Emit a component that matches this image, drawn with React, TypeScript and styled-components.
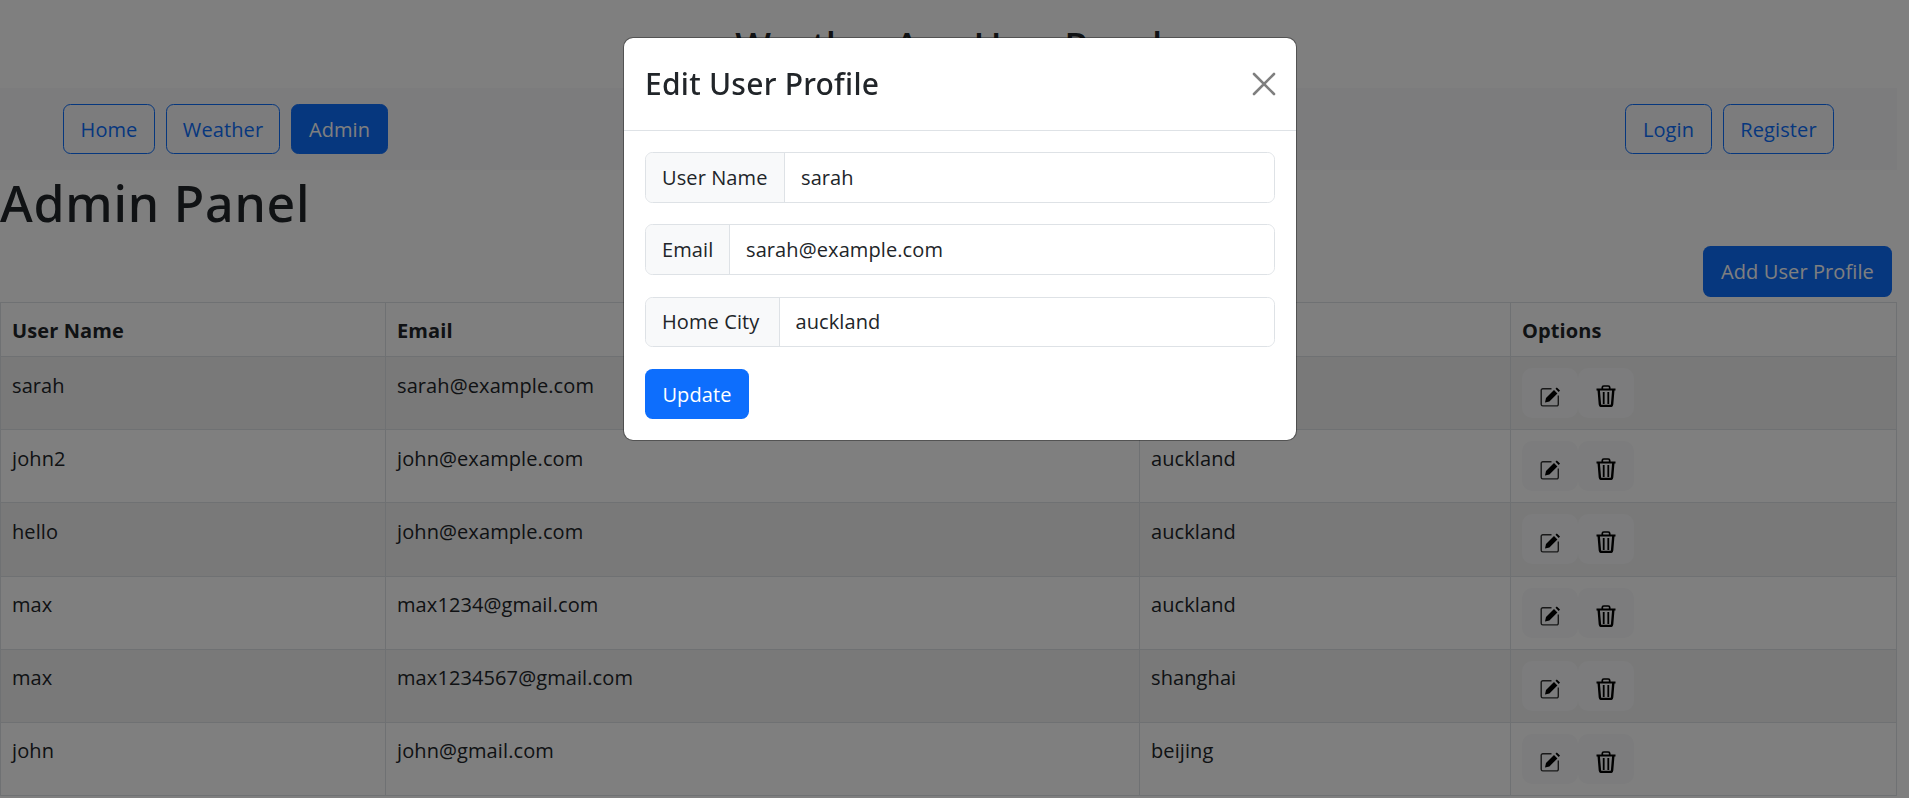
import React from "react";
import styled, { createGlobalStyle } from "styled-components";

const FONT = `"Open Sans", "Noto Sans", "Liberation Sans", sans-serif`;
const HEADING = `"Noto Sans", "Open Sans", "Liberation Sans", sans-serif`;

const Global = createGlobalStyle`
  html, body { margin: 0; padding: 0; background: #fff; }
  body { font-family: ${FONT}; font-size: 20px; color: #212529; letter-spacing: 0.1px; overflow: hidden; }
  * { box-sizing: border-box; }
`;

const Page = styled.div`
  width: 1897px;
`;
const SiteTitle = styled.h1`
  margin: 0;
  padding: 15px 0 12.5px;
  height: 87.5px;
  line-height: 60px;
  font-family: ${HEADING};
  font-size: 38px;
  font-weight: 500;
  letter-spacing: -0.7px;
  text-align: center;
`;
const NavBar = styled.nav`
  height: 82px;
  background: #f8f9fa;
  padding: 16.5px 63px 16px 63px;
  display: flex;
  justify-content: space-between;
`;
const NavGroup = styled.div`
  display: flex;
  gap: 11px;
`;
const NavButton = styled.button<{ $active?: boolean; $w: number }>`
  width: ${(p) => p.$w}px;
  height: 50px;
  border-radius: 7.5px;
  border: 1.25px solid #0d6efd;
  background: ${(p) => (p.$active ? "#0d6efd" : "transparent")};
  color: ${(p) => (p.$active ? "#fff" : "#0d6efd")};
  font: inherit;
  letter-spacing: inherit;
  padding: 0;
`;
const PageTitle = styled.h1`
  margin: 0;
  padding-top: 3px;
  height: 76.5px;
  line-height: 60px;
  font-family: ${HEADING};
  font-size: 50px;
  font-weight: 500;
  letter-spacing: 0.8px;
`;
const Actions = styled.div`
  display: flex;
  justify-content: flex-end;
  padding-right: 5px;
  height: 56px;
`;
const AddButton = styled.button`
  width: 189px;
  height: 51px;
  border-radius: 7.5px;
  border: 0;
  background: #0d6efd;
  color: #fff;
  font: inherit;
  letter-spacing: inherit;
  padding: 0;
`;
const Table = styled.table`
  width: 1897px;
  border-collapse: collapse;
  table-layout: fixed;
`;
const Th = styled.th`
  height: 54px;
  border: 1.25px solid #dee2e6;
  padding: 2px 11px 0;
  text-align: left;
  font-weight: 700;
`;
const Row = styled.tr<{ $striped: boolean }>`
  background: ${(p) => (p.$striped ? "#f2f2f2" : "#fff")};
`;
const Td = styled.td`
  height: 73.2px;
  border: 1.25px solid #dee2e6;
  padding: 13.5px 10px 0 11px;
  vertical-align: top;
  line-height: 30px;
`;
const OptionsTd = styled(Td)`
  padding-top: 11px;
`;
const IconCell = styled.div`
  display: flex;
`;
const IconButton = styled.button`
  width: 56px;
  height: 50px;
  border: 0;
  border-radius: 10px;
  background: #f8f9fa;
  padding: 6px 0 0;
  display: flex;
  align-items: center;
  justify-content: center;
  color: #000;
`;
const Backdrop = styled.div`
  position: fixed;
  inset: 0;
  background: rgba(0, 0, 0, 0.5);
`;
const Modal = styled.div`
  position: fixed;
  left: 623px;
  top: 37px;
  width: 674px;
  height: 404px;
  background: #fff;
  border: 1px solid rgba(0, 0, 0, 0.35);
  border-radius: 10px;
  background-clip: padding-box;
`;
const ModalHeader = styled.div`
  height: 92.5px;
  border-bottom: 1.25px solid #dee2e6;
  display: flex;
  align-items: center;
  justify-content: space-between;
  padding: 0 20px 0 21px;
`;
const ModalTitle = styled.h4`
  margin: 0;
  font-family: ${HEADING};
  font-size: 30px;
  font-weight: 500;
  line-height: 36px;
  letter-spacing: 0.25px;
`;
const CloseButton = styled.button`
  border: 0;
  background: none;
  padding: 0;
  width: 24px;
  height: 24px;
  display: flex;
  color: #7f7f7f;
`;
const ModalBody = styled.form`
  padding: 21.5px 21px 0;
`;
const Group = styled.div`
  display: flex;
  height: 50.5px;
  margin-bottom: 21.85px;
  border: 1.25px solid #dee2e6;
  border-radius: 7.5px;
  overflow: hidden;
`;
const GroupLabel = styled.span<{ $w: number }>`
  width: ${(p) => p.$w}px;
  flex: none;
  background: #f8f9fa;
  border-right: 1.25px solid #dee2e6;
  display: flex;
  align-items: center;
  padding-left: 16px;
`;
const GroupInput = styled.input`
  flex: 1;
  border: 0;
  outline: 0;
  padding: 0 16px;
  font: inherit;
  letter-spacing: inherit;
  color: #212529;
`;
const UpdateButton = styled.button`
  width: 104px;
  height: 50px;
  border: 0;
  border-radius: 7.5px;
  background: #0d6efd;
  color: #fff;
  font: inherit;
  letter-spacing: inherit;
  padding: 0;
`;

const EditIcon = () => (
  <svg width="21" height="21" viewBox="0 0 21 21" fill="none">
    <path d="M11.500 2.700H2.800a1.600 1.600 0 0 0-1.600 1.600V18.300a1.600 1.600 0 0 0 1.600 1.600h13.900a1.600 1.600 0 0 0 1.600-1.600V9.500" stroke="currentColor" strokeOpacity="0.8" strokeWidth="1.400" />
    <path d="M5 16.500l1-4.500 8-8 3.400 3.400-8 8z M15.500 2.700l1.300-1.300 3.200 3.200-1.300 1.300z" fill="currentColor" />
  </svg>
);
const TrashIcon = () => (
  <svg width="20" height="22" viewBox="0 0 20 22" fill="none" stroke="currentColor">
    <path d="M0.500 4.500h19" strokeWidth="2" />
    <path d="M6.300 4V2.400Q6.300 1 7.800 1h4.400q1.500 0 1.500 1.400V4" strokeWidth="1.700" />
    <path d="M2.700 5l1.200 14.300Q4.100 21 5.800 21h8.400q1.700 0 1.900-1.700L17.300 5" strokeWidth="2.400" />
    <path d="M7.700 7v12M12.300 7v12" strokeWidth="1.800" />
  </svg>
);

const users = [
  ["sarah", "sarah@example.com", "auckland"],
  ["john2", "john@example.com", "auckland"],
  ["hello", "john@example.com", "auckland"],
  ["max", "max1234@gmail.com", "auckland"],
  ["max", "max1234567@gmail.com", "shanghai"],
  ["john", "john@gmail.com", "beijing"],
];

export default function App() {
  return (
    <>
      <Global />
      <Page>
        <SiteTitle>Weather App User Panel</SiteTitle>
        <NavBar>
          <NavGroup>
            <NavButton $w={92}>Home</NavButton>
            <NavButton $w={114}>Weather</NavButton>
            <NavButton $w={97} $active>Admin</NavButton>
          </NavGroup>
          <NavGroup>
            <NavButton $w={87}>Login</NavButton>
            <NavButton $w={111}>Register</NavButton>
          </NavGroup>
        </NavBar>
        <PageTitle>Admin Panel</PageTitle>
        <Actions>
          <AddButton>Add User Profile</AddButton>
        </Actions>
        <Table>
          <colgroup>
            <col style={{ width: 385 }} />
            <col style={{ width: 754 }} />
            <col style={{ width: 371 }} />
            <col />
          </colgroup>
          <thead>
            <tr>
              <Th>User Name</Th>
              <Th>Email</Th>
              <Th>Home City</Th>
              <Th>Options</Th>
            </tr>
          </thead>
          <tbody>
            {users.map((u, i) => (
              <Row key={i} $striped={i % 2 === 0}>
                <Td>{u[0]}</Td>
                <Td>{u[1]}</Td>
                <Td>{u[2]}</Td>
                <OptionsTd>
                  <IconCell>
                    <IconButton><EditIcon /></IconButton>
                    <IconButton><TrashIcon /></IconButton>
                  </IconCell>
                </OptionsTd>
              </Row>
            ))}
          </tbody>
        </Table>
      </Page>
      <Backdrop />
      <Modal>
        <ModalHeader>
          <ModalTitle>Edit User Profile</ModalTitle>
          <CloseButton aria-label="Close">
            <svg width="24" height="24" viewBox="0 0 24 24" stroke="currentColor" strokeWidth="2.600" strokeLinecap="round">
              <path d="M2 2l20 20M22 2L2 22" />
            </svg>
          </CloseButton>
        </ModalHeader>
        <ModalBody>
          <Group>
            <GroupLabel $w={139}>User Name</GroupLabel>
            <GroupInput defaultValue="sarah" />
          </Group>
          <Group>
            <GroupLabel $w={84}>Email</GroupLabel>
            <GroupInput defaultValue="sarah@example.com" />
          </Group>
          <Group>
            <GroupLabel $w={133.500}>Home City</GroupLabel>
            <GroupInput defaultValue="auckland" />
          </Group>
          <UpdateButton type="button">Update</UpdateButton>
        </ModalBody>
      </Modal>
    </>
  );
}
